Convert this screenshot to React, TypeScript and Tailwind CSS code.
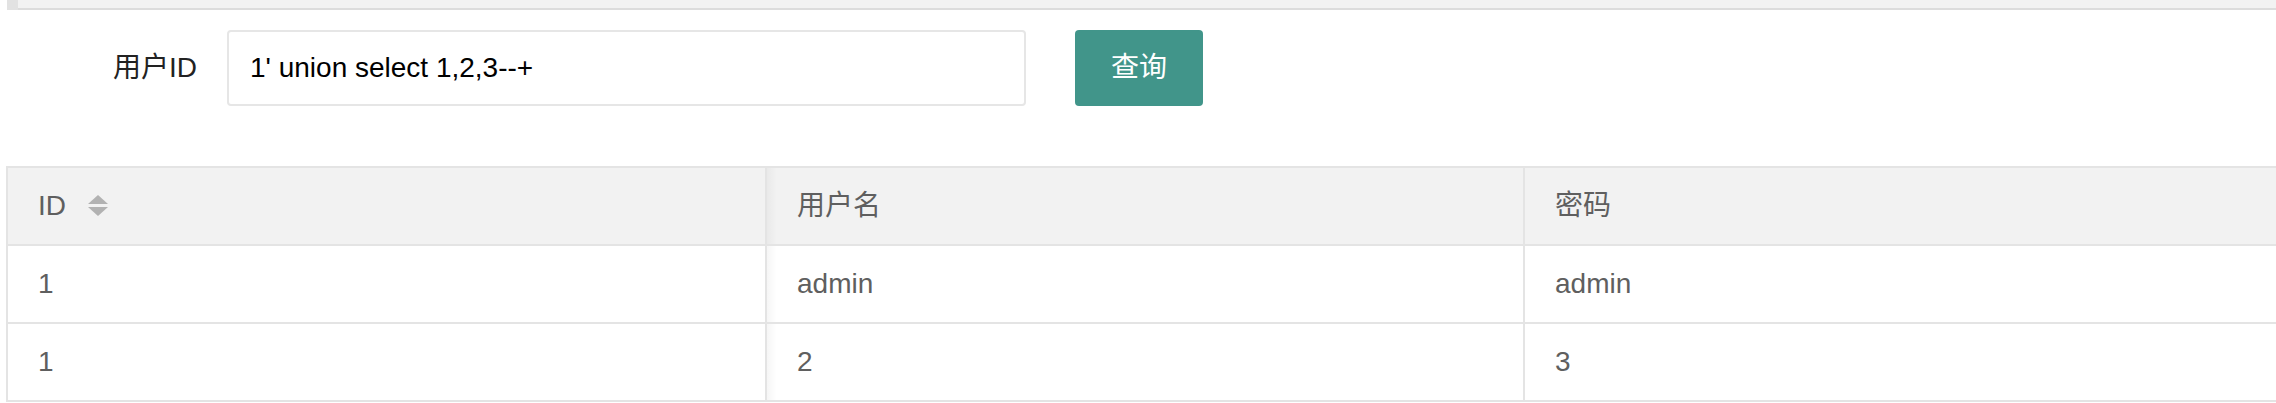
import React from 'react';

const rows = [
  { id: '1', name: 'admin', pwd: 'admin' },
  { id: '1', name: '2', pwd: '3' },
];

function SortIcon() {
  return (
    <svg width="20" height="22" viewBox="0 0 20 22" className="ml-[22px]">
      <polygon points="10,0 20,9 0,9" fill="#b2b2b2" />
      <polygon points="0,12 20,12 10,21" fill="#b2b2b2" />
    </svg>
  );
}

export default function App() {
  return (
    <div className="w-[2276px] h-[403px] overflow-hidden bg-white font-['Liberation_Sans','Noto_Sans_CJK_SC',sans-serif]">
      {/* top bar, cut off at the top of the page */}
      <div className="ml-[7px] h-[10px] flex">
        <div className="w-[11px] h-full bg-[#e2e2e2]" />
        <div className="flex-1 h-full bg-[#f2f2f2] border-b-2 border-[#dcdcdc]" />
      </div>

      {/* search form */}
      <div className="mt-[20px] flex items-center h-[76px]">
        <label className="w-[197px] text-right text-[28px] text-[#222]">用户ID</label>
        <input
          defaultValue="1' union select 1,2,3--+"
          className="ml-[30px] w-[799px] h-[76px] border-2 border-[#e6e6e6] rounded-[4px] pl-[21px] text-[28px] text-black outline-none"
        />
        <button className="ml-[49px] w-[128px] h-[76px] rounded-[4px] bg-[#41958a] text-white text-[28px]">
          查询
        </button>
      </div>

      {/* result table */}
      <div className="mt-[60px] ml-[6px] w-[2290px] border-t-2 border-l-2 border-[#e4e4e4] text-[28px] text-[#5f5f5f]">
        <div className="flex h-[78px] bg-[#f2f2f2] border-b-2 border-[#e4e4e4]">
          <div className="w-[759px] h-[76px] pl-[30px] flex items-center border-r-2 border-[#e4e4e4]">
            <span>ID</span>
            <SortIcon />
          </div>
          <div className="w-[758px] h-[76px] pl-[30px] flex items-center border-r-2 border-[#e4e4e4] bg-[linear-gradient(to_right,rgba(0,0,0,0.035),transparent_10px)]">
            用户名
          </div>
          <div className="flex-1 h-[76px] pl-[30px] flex items-center">密码</div>
        </div>
        {rows.map((r, i) => (
          <div key={i} className="flex h-[78px] border-b-2 border-[#e4e4e4]">
            <div className="w-[759px] h-[76px] pl-[30px] flex items-center border-r-2 border-[#e4e4e4]">{r.id}</div>
            <div className="w-[758px] h-[76px] pl-[30px] flex items-center border-r-2 border-[#e4e4e4] bg-[linear-gradient(to_right,rgba(0,0,0,0.035),transparent_10px)]">
              {r.name}
            </div>
            <div className="flex-1 h-[76px] pl-[30px] flex items-center">{r.pwd}</div>
          </div>
        ))}
      </div>
    </div>
  );
}
